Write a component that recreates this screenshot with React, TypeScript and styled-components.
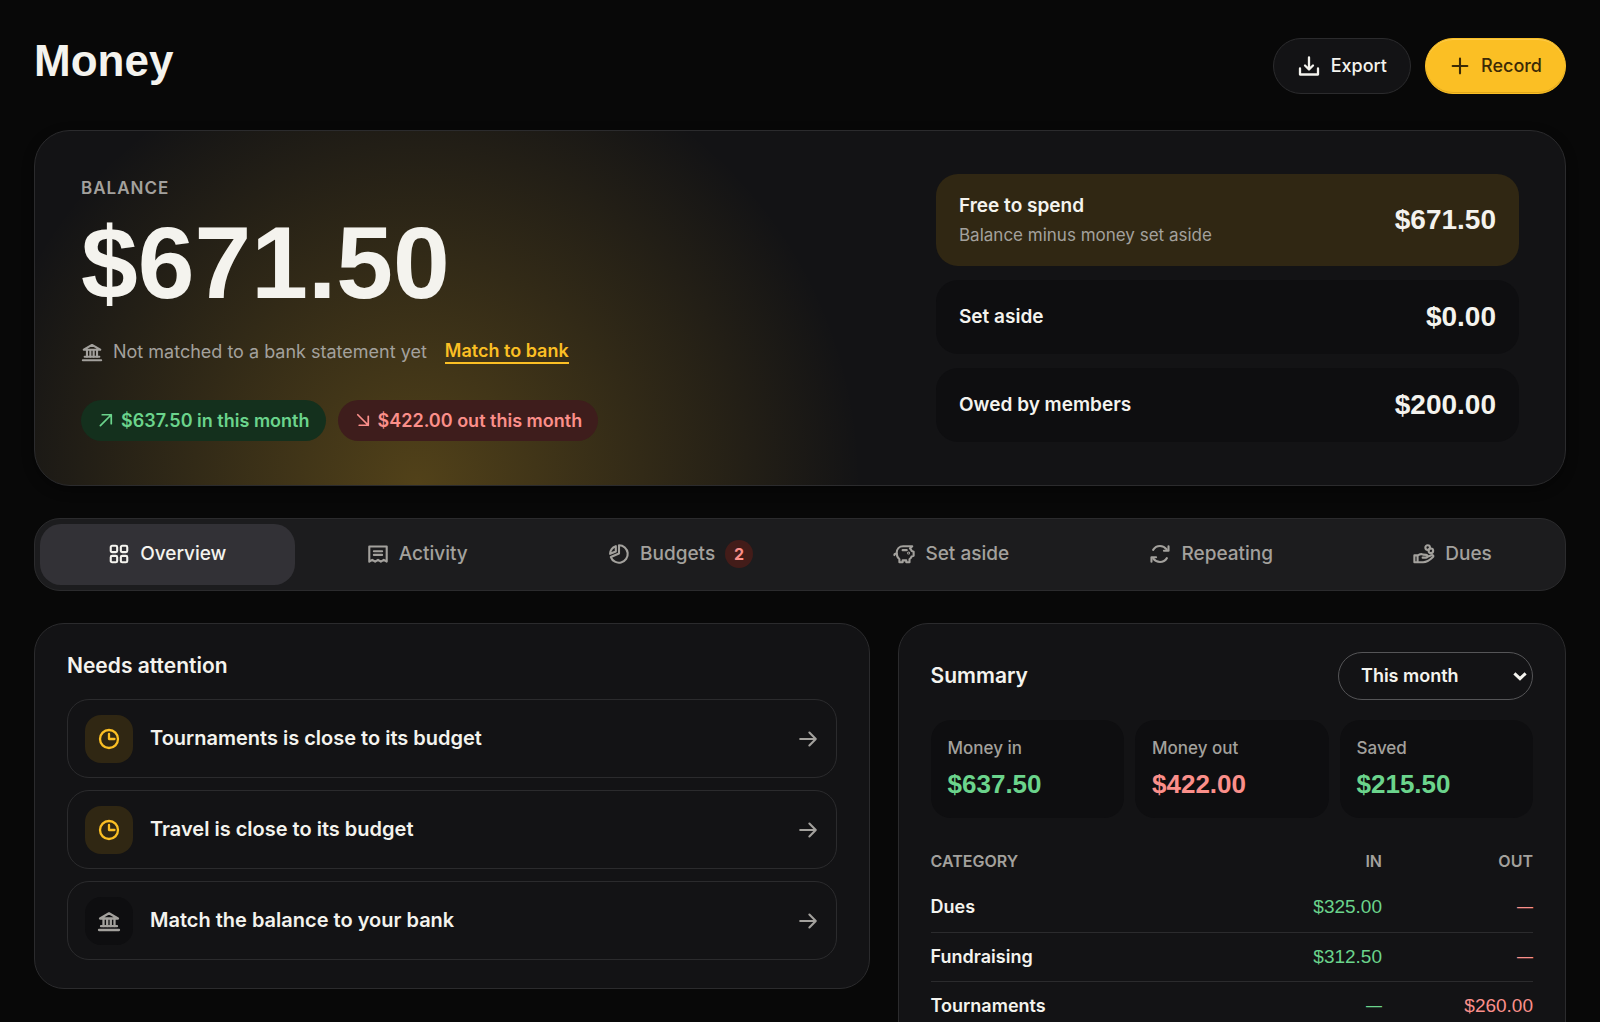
import React from 'react';
import styled, { createGlobalStyle, css } from 'styled-components';

const color = {
  page: '#080808',
  panel: '#131315',
  sunken: '#0e0e10',
  nav: '#1c1c1e',
  active: '#323136',
  line: '#2b2b2d',
  text: '#f4f3ee',
  muted: '#a3a19d',
  gold: '#fbbf24',
  goldTint: '#302713',
  ink: '#3b2a06',
  green: '#6bd48c',
  red: '#fb8f8a',
};
const sans = 'Inter, "Liberation Sans", sans-serif';
const figures = '"Liberation Sans", Arial, sans-serif';

const GlobalStyle = createGlobalStyle`
  *, *::before, *::after { box-sizing: border-box; }
  body {
    margin: 0;
    background: ${color.page};
    color: ${color.text};
    font: 400 18px/24px ${sans};
    -webkit-font-smoothing: antialiased;
  }
  h1, h2, p, ul { margin: 0; padding: 0; }
  button, select { font: inherit; color: inherit; }
`;

const Page = styled.main`
  padding: 38px 34px 32px;
`;

const Header = styled.header`
  display: flex;
  justify-content: space-between;
  align-items: flex-start;
  margin-bottom: 36px;
`;

const Title = styled.h1`
  font: 700 44px/46px ${figures};
`;

const Actions = styled.div`
  display: flex;
  gap: 14px;
`;

const Button = styled.button<{ $primary?: boolean }>`
  display: inline-flex;
  align-items: center;
  gap: 10px;
  height: 56px;
  padding: 0 23px;
  border: 1px solid ${color.line};
  border-radius: 28px;
  background: ${color.panel};
  font-weight: 500;
  cursor: pointer;
  ${(p) =>
    p.$primary &&
    css`
      border-color: ${color.gold};
      background: ${color.gold};
      color: ${color.ink};
      box-shadow: inset 0 1px 0 rgba(255, 255, 255, 0.2), inset 0 -1px 0 rgba(120, 80, 0, 0.2);
    `}
`;

const Svg = styled.svg<{ $size: number }>`
  flex: none;
  width: ${(p) => p.$size}px;
  height: ${(p) => p.$size}px;
  fill: none;
  stroke: currentColor;
  stroke-width: 2.3;
  stroke-linejoin: round;
  stroke-linecap: round;
`;

const Hero = styled.section`
  display: grid;
  grid-template-columns: minmax(0, 809fr) minmax(0, 583fr);
  gap: 46px;
  margin-bottom: 32px;
  padding: 43px 46px;
  border: 1px solid ${color.line};
  border-radius: 36px;
  background:
    radial-gradient(29% 127% at 25% 100%, rgba(251, 191, 36, 0.27), rgba(251, 191, 36, 0)),
    ${color.panel};
  box-shadow: 0 4px 12px rgba(0, 0, 0, 0.4);
`;

const Balance = styled.div`
  display: flex;
  flex-direction: column;
  justify-content: center;
`;

const Caption = styled.h2`
  color: ${color.muted};
  font: 600 17px/24px ${sans};
  letter-spacing: 1px;
`;

const Amount = styled.p`
  margin: 12px 0 24px;
  font: 700 102px/102px ${figures};
`;

const Status = styled.p`
  display: flex;
  align-items: center;
  gap: 10px;
  margin-bottom: 34px;
  color: ${color.muted};
  line-height: 28px;
`;

const MatchLink = styled.a`
  margin-left: 8px;
  border-bottom: 2px solid ${color.gold};
  color: ${color.gold};
  font-weight: 600;
  line-height: 22px;
  text-decoration: none;
`;

const Pills = styled.div`
  display: flex;
  flex-wrap: wrap;
  gap: 12px;
`;

const Pill = styled.span<{ $tone: 'in' | 'out' }>`
  display: inline-flex;
  align-items: center;
  gap: 6px;
  padding: 0 16px;
  border-radius: 21px;
  background: ${(p) => (p.$tone === 'in' ? '#14301d' : '#3e1d1c')};
  color: ${(p) => (p.$tone === 'in' ? color.green : color.red)};
  font-weight: 600;
  line-height: 41px;
`;

const Funds = styled.div`
  display: flex;
  flex-direction: column;
  gap: 14px;
`;

const Fund = styled.div<{ $highlight?: boolean }>`
  display: flex;
  justify-content: space-between;
  align-items: center;
  min-height: ${(p) => (p.$highlight ? 92 : 74)}px;
  padding: 0 23px;
  border-radius: 22px;
  background: ${(p) => (p.$highlight ? color.goldTint : color.sunken)};
`;

const FundName = styled.p`
  font-size: 19px;
  font-weight: 600;
  line-height: 30px;
`;

const FundHint = styled.p`
  color: ${color.muted};
  font-size: 17px;
  line-height: 28px;
`;

const FundValue = styled.span`
  font: 700 28px/32px ${figures};
`;

const Nav = styled.nav`
  display: flex;
  gap: 4px;
  margin-bottom: 32px;
  padding: 5px;
  border: 1px solid ${color.line};
  border-radius: 26px;
  background: ${color.nav};
`;

const Tab = styled.button<{ $active?: boolean }>`
  display: inline-flex;
  flex: 1 1 auto;
  justify-content: center;
  align-items: center;
  gap: 10px;
  height: 61px;
  padding: 0 0 2px;
  border: 0;
  border-radius: 21px;
  background: ${(p) => (p.$active ? color.active : 'transparent')};
  color: ${(p) => (p.$active ? color.text : color.muted)};
  font-size: 19px;
  font-weight: 500;
  cursor: pointer;
`;

const Badge = styled.span`
  width: 28px;
  border-radius: 14px;
  background: #431c19;
  color: ${color.red};
  font-size: 16px;
  font-weight: 700;
  line-height: 28px;
`;

const Columns = styled.div`
  display: grid;
  grid-template-columns: minmax(0, 5fr) minmax(0, 4fr);
  align-items: start;
  gap: 28px;
`;

const Card = styled.section`
  padding: 28px 32px;
  border: 1px solid ${color.line};
  border-radius: 30px;
  background: ${color.panel};
`;

const CardTitle = styled.h2`
  font-size: 21px;
  font-weight: 600;
  line-height: 28px;
`;

const Alerts = styled.ul`
  display: flex;
  flex-direction: column;
  gap: 12px;
  margin-top: 19px;
  list-style: none;
`;

const Alert = styled.a`
  display: flex;
  align-items: center;
  gap: 17px;
  min-height: 79px;
  padding: 0 17px;
  border: 1px solid ${color.line};
  border-radius: 22px;
  color: ${color.muted};
  text-decoration: none;
`;

const Tile = styled.span<{ $gold?: boolean }>`
  display: grid;
  flex: none;
  place-items: center;
  width: 48px;
  height: 48px;
  border-radius: 16px;
  background: ${(p) => (p.$gold ? color.goldTint : color.sunken)};
  color: ${(p) => (p.$gold ? color.gold : color.muted)};
`;

const AlertText = styled.span`
  flex: 1;
  padding-bottom: 2px;
  color: ${color.text};
  font-size: 20px;
  font-weight: 600;
`;

const CardHead = styled.div`
  display: flex;
  justify-content: space-between;
  align-items: center;
  margin-bottom: 20px;
`;

const SelectBox = styled.div`
  display: grid;
  align-items: center;
  width: 195px;

  > * {
    grid-area: 1 / 1;
  }

  > svg {
    justify-self: end;
    margin-right: 4px;
    stroke-width: 4;
    stroke-linecap: butt;
    stroke-linejoin: miter;
    pointer-events: none;
  }
`;

const Select = styled.select`
  height: 48px;
  padding: 0 36px 0 22px;
  border: 1px solid #555557;
  border-radius: 24px;
  background: ${color.panel};
  font-weight: 600;
  appearance: none;
`;

const Stats = styled.div`
  display: grid;
  grid-template-columns: repeat(3, minmax(0, 1fr));
  gap: 11px;
  margin-bottom: 21px;
`;

const Stat = styled.div`
  padding: 16px 17px 17px;
  border-radius: 20px;
  background: ${color.sunken};
`;

const StatName = styled.p`
  margin-bottom: 7px;
  color: ${color.muted};
  font-size: 17px;
  font-weight: 500;
`;

const StatValue = styled.p<{ $tone: 'in' | 'out' }>`
  color: ${(p) => (p.$tone === 'in' ? color.green : color.red)};
  font: 700 26px/34px ${figures};
`;

const Table = styled.table`
  width: 100%;
  border-collapse: collapse;
  text-align: right;

  th, td {
    padding: 0;
  }

  th:first-child {
    text-align: left;
  }

  thead th {
    height: 44px;
    color: ${color.muted};
    font-size: 16px;
    font-weight: 600;
  }

  thead th:last-child {
    width: 151px;
  }

  tbody tr + tr {
    border-top: 1px solid ${color.line};
  }

  tbody th {
    height: 49px;
    font-weight: 600;
  }
`;

const Money = styled.td<{ $tone: 'in' | 'out'; $empty: boolean }>`
  color: ${(p) => (p.$tone === 'in' ? color.green : color.red)};
  font-family: ${figures};
  font-size: ${(p) => (p.$empty ? 16 : 19)}px;
`;

const shapes = {
  download: <path d="M12 3.5v11.5M8 11.5l4 4 4-4M3 14.5v6h18v-6" />,
  plus: <path d="M12 4v16M4 12h16" />,
  bank: (
    <>
      <path d="M3 9.500 12 4.300l9 5.200zM2 21h20M4 17.200h16" />
      <path d="M6.500 10v7M10.200 10v7M13.800 10v7M17.500 10v7" />
    </>
  ),
  up: <path d="M4.500 19.500 19 5M7 5h12v12" />,
  down: <path d="M5 5l14 14M19 7v12H7" />,
  grid: (
    <>
      <rect x="3" y="3" width="7" height="7" rx="1.500" />
      <rect x="14" y="3" width="7" height="7" rx="1.500" />
      <rect x="3" y="14" width="7" height="7" rx="1.500" />
      <rect x="14" y="14" width="7" height="7" rx="1.500" />
    </>
  ),
  receipt: <path d="M2.500 3.800h19v16.500l-3.200-2-3.200 2-3.100-2-3.100 2-3.200-2-3.200 2zM7.500 9h9M7.500 13h9" />,
  pie: (
    <>
      <path d="M12 2.500a9.500 9.500 0 1 1-8.900 12.800L12 11.500z" />
      <path d="M8.500 3.500v5.700L2.300 11.800a9.300 9.300 0 0 1 6.200-8.300z" />
    </>
  ),
  piggy: (
    <>
      <path d="M21 3.500H11C6.800 3.500 4 6.800 4 11c0 3 1.200 5.200 3 6.700V21h3.500v-2h4v2H18v-3.300c1-.8 1.700-1.700 2.200-2.900l2.300-.8V9.500l-2-.7c-.5-1.200-1.200-2.100-2-2.800z" />
      <path d="M10.500 7.800h4.500M4 11.500c-1.500 0-2.500.6-2.500 1.700" />
      <circle cx="17" cy="11" r="0.500" />
    </>
  ),
  repeat: (
    <>
      <path d="M4.500 7.500C6.200 4.800 8.800 3.300 12 3.300c3 0 5.500 1.400 7.300 3.700M19.500 16.500c-1.700 2.700-4.300 4.200-7.500 4.200-3 0-5.500-1.400-7.300-3.700" />
      <path d="M21.300 3.500v5h-5M2.700 20.500v-5h5" />
    </>
  ),
  hand: (
    <>
      <path d="M1.500 13.500H5V21H1.500zM5 14c2-1.800 4-2.300 6-1.300l3.500.3c1.800.2 1.800 2.800 0 2.900l-4 .1M14.500 15.500l5.500-2.200c1.800-.6 2.900 1.100 1.500 2.300C18.500 18.500 15 21 11 21H5" />
      <circle cx="16" cy="5" r="2.500" />
      <circle cx="19.500" cy="8.500" r="2.500" />
    </>
  ),
  clock: (
    <>
      <circle cx="12" cy="12" r="9" />
      <path d="M12 7v5h5.500" />
    </>
  ),
  arrow: <path d="M3.500 12h17M13.500 5l7 7-7 7" />,
  chevron: <path d="M4.500 8.500l7.500 7 7.500-7" />,
};

function Icon({ name, size = 22 }: { name: keyof typeof shapes; size?: number }) {
  return (
    <Svg $size={size} viewBox="0 0 24 24" aria-hidden="true">
      {shapes[name]}
    </Svg>
  );
}

const tabs: { label: string; icon: keyof typeof shapes; count?: number }[] = [
  { label: 'Overview', icon: 'grid' },
  { label: 'Activity', icon: 'receipt' },
  { label: 'Budgets', icon: 'pie', count: 2 },
  { label: 'Set aside', icon: 'piggy' },
  { label: 'Repeating', icon: 'repeat' },
  { label: 'Dues', icon: 'hand' },
];

const alerts: { text: string; icon: 'clock' | 'bank' }[] = [
  { text: 'Tournaments is close to its budget', icon: 'clock' },
  { text: 'Travel is close to its budget', icon: 'clock' },
  { text: 'Match the balance to your bank', icon: 'bank' },
];

const categories = [
  { name: 'Dues', in: '$325.00', out: '—' },
  { name: 'Fundraising', in: '$312.50', out: '—' },
  { name: 'Tournaments', in: '—', out: '$260.00' },
];

export default function App() {
  const [tab, setTab] = React.useState('Overview');
  return (
    <>
      <GlobalStyle />
      <Page>
        <Header>
          <Title>Money</Title>
          <Actions>
            <Button type="button">
              <Icon name="download" size={24} />
              Export
            </Button>
            <Button type="button" $primary>
              <Icon name="plus" size={22} />
              Record
            </Button>
          </Actions>
        </Header>

        <Hero>
          <Balance>
            <Caption>BALANCE</Caption>
            <Amount>$671.50</Amount>
            <Status>
              <Icon name="bank" />
              <span>Not matched to a bank statement yet</span>
              <MatchLink href="#match">Match to bank</MatchLink>
            </Status>
            <Pills>
              <Pill $tone="in">
                <Icon name="up" size={18} />
                $637.50 in this month
              </Pill>
              <Pill $tone="out">
                <Icon name="down" size={18} />
                $422.00 out this month
              </Pill>
            </Pills>
          </Balance>
          <Funds>
            <Fund $highlight>
              <div>
                <FundName>Free to spend</FundName>
                <FundHint>Balance minus money set aside</FundHint>
              </div>
              <FundValue>$671.50</FundValue>
            </Fund>
            <Fund>
              <FundName>Set aside</FundName>
              <FundValue>$0.00</FundValue>
            </Fund>
            <Fund>
              <FundName>Owed by members</FundName>
              <FundValue>$200.00</FundValue>
            </Fund>
          </Funds>
        </Hero>

        <Nav aria-label="Money sections">
          {tabs.map((t) => (
            <Tab key={t.label} type="button" $active={t.label === tab} onClick={() => setTab(t.label)}>
              <Icon name={t.icon} />
              {t.label}
              {t.count && <Badge>{t.count}</Badge>}
            </Tab>
          ))}
        </Nav>

        <Columns>
          <Card>
            <CardTitle>Needs attention</CardTitle>
            <Alerts>
              {alerts.map((a) => (
                <li key={a.text}>
                  <Alert href="#alert">
                    <Tile $gold={a.icon === 'clock'}>
                      <Icon name={a.icon} size={24} />
                    </Tile>
                    <AlertText>{a.text}</AlertText>
                    <Icon name="arrow" />
                  </Alert>
                </li>
              ))}
            </Alerts>
          </Card>

          <Card>
            <CardHead>
              <CardTitle>Summary</CardTitle>
              <SelectBox>
                <Select aria-label="Period" defaultValue="This month">
                  <option>This month</option>
                </Select>
                <Icon name="chevron" size={18} />
              </SelectBox>
            </CardHead>
            <Stats>
              <Stat>
                <StatName>Money in</StatName>
                <StatValue $tone="in">$637.50</StatValue>
              </Stat>
              <Stat>
                <StatName>Money out</StatName>
                <StatValue $tone="out">$422.00</StatValue>
              </Stat>
              <Stat>
                <StatName>Saved</StatName>
                <StatValue $tone="in">$215.50</StatValue>
              </Stat>
            </Stats>
            <Table>
              <thead>
                <tr>
                  <th scope="col">CATEGORY</th>
                  <th scope="col">IN</th>
                  <th scope="col">OUT</th>
                </tr>
              </thead>
              <tbody>
                {categories.map((c) => (
                  <tr key={c.name}>
                    <th scope="row">{c.name}</th>
                    <Money $tone="in" $empty={c.in === '—'}>{c.in}</Money>
                    <Money $tone="out" $empty={c.out === '—'}>{c.out}</Money>
                  </tr>
                ))}
              </tbody>
            </Table>
          </Card>
        </Columns>
      </Page>
    </>
  );
}
